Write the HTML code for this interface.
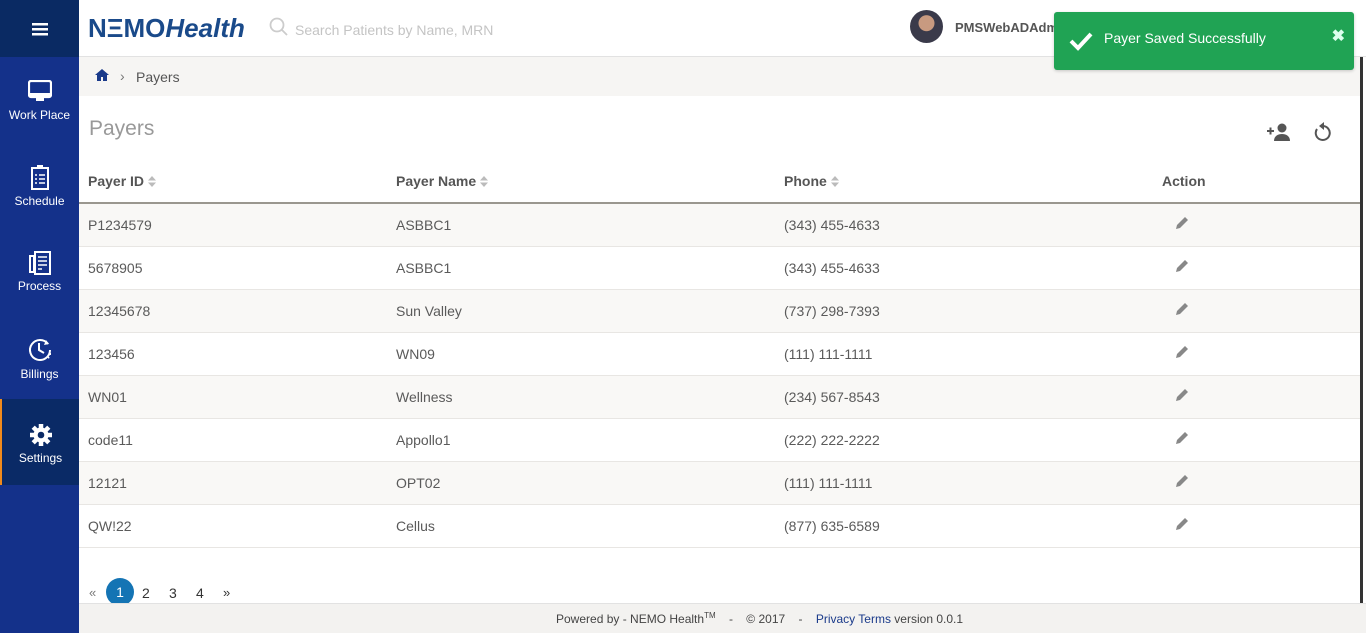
<!DOCTYPE html>
<html><head><meta charset="utf-8"><style>
*{box-sizing:border-box;margin:0;padding:0}
body{width:1366px;height:633px;overflow:hidden;font-family:"Liberation Sans",Arial,sans-serif;background:#fff;position:relative;color:#555}
.side{position:absolute;left:0;top:0;width:79px;height:633px;background:#14318a}
.ham{height:57px;background:#0a2a63;display:flex;align-items:center;justify-content:center}
.nav{position:absolute;left:0;width:79px;height:86px;color:#fff;font-size:12px;text-align:center}
.nav svg{display:block;margin:0 auto 4px}
.top{position:absolute;left:79px;top:0;right:0;height:57px;border-bottom:1px solid #e2e2e2;background:#fff}
.crumb{position:absolute;left:79px;top:57px;right:6px;height:39px;background:#f6f5f3;font-size:14px;color:#555}
.scroll{position:absolute;right:0;top:57px;width:6px;height:546px;background:#fff;border-left:3px solid #333}
table{position:absolute;left:79px;top:160px;width:1281px;border-collapse:collapse;font-size:14px}
th{text-align:left;height:43px;font-weight:bold;color:#555;border-bottom:2px solid #9a978f;padding-left:9px}
td{height:43px;border-bottom:1px solid #e8e6e3;padding-left:9px;color:#5a5a5a}
tbody tr:nth-child(odd){background:#f9f8f6}
.s{display:inline-block;vertical-align:middle;margin-left:4px;margin-top:-2px}
.foot{position:absolute;left:79px;right:0;top:603px;height:30px;background:#f3f2f0;border-top:1px solid #e2e2e2;font-size:12px;color:#444}
.toast{position:absolute;left:1054px;top:12px;width:300px;height:58px;background:#20a354;border-radius:3px;color:#fff;font-size:14px;box-shadow:0 1px 3px rgba(0,0,0,.2)}
</style></head><body>
<div class="side">
<div class="ham"><svg width="16" height="14"><rect y="1" width="16" height="2.5" fill="#fff"/><rect y="6" width="16" height="2.5" fill="#fff"/><rect y="11" width="16" height="2.5" fill="#fff"/></svg></div>
<div class="nav" style="top:80px"><svg width="24" height="24" viewBox="0 0 24 24"><rect x="1" y="1" width="22" height="16" rx="2" fill="none" stroke="#fff" stroke-width="2.2"/><rect x="1" y="13" width="22" height="4" fill="#fff"/><rect x="8" y="18" width="8" height="3" fill="#fff"/></svg>Work Place</div>
<div class="nav" style="top:164px"><svg width="20" height="26" viewBox="0 0 20 26"><rect x="2" y="4" width="16" height="21" fill="none" stroke="#fff" stroke-width="2"/><rect x="7" y="1" width="6" height="4" fill="#fff"/><path d="M5 11h2M9 11h6M5 15h2M9 15h6M5 19h2M9 19h6" stroke="#fff" stroke-width="1.5"/></svg>Schedule</div>
<div class="nav" style="top:251px"><svg width="24" height="24" viewBox="0 0 24 24"><rect x="7" y="1" width="15" height="22" fill="none" stroke="#fff" stroke-width="2"/><rect x="2" y="5" width="4" height="16" fill="none" stroke="#fff" stroke-width="2"/><path d="M10 6h9M10 10h9M10 14h9M10 18h4" stroke="#fff" stroke-width="1.6"/></svg>Process</div>
<div class="nav" style="top:337px"><svg width="26" height="26" viewBox="0 0 26 26"><path d="M21 7A10 10 0 1 0 23 13" fill="none" stroke="#fff" stroke-width="2"/><path d="M23 16v3M22 20l-1 1" stroke="#fff" stroke-width="2" stroke-dasharray="2 2"/><path d="M12 6v7l5 3" fill="none" stroke="#fff" stroke-width="2"/><path d="M19 3l3 4-5 1z" fill="#fff"/></svg>Billings</div>
<div class="nav" style="top:399px;height:86px;background:#0a2a66;border-left:2px solid #f08a1c;padding-top:24px"><svg width="24" height="24" viewBox="0 0 24 24"><circle cx="12" cy="12" r="7.5" fill="#fff"/><g stroke="#fff" stroke-width="4.5"><path d="M12 1v22M1 12h22M4.2 4.2l15.6 15.6M19.8 4.2L4.2 19.8"/></g><circle cx="12" cy="12" r="3.3" fill="#0a2a66"/></svg>Settings</div>
</div>
<div class="top">
<div style="position:absolute;left:9px;top:13px;font-size:26px;font-weight:bold;color:#1a4a8a;letter-spacing:0">N<span>Ξ</span>MO<i>Health</i></div>
<svg style="position:absolute;left:190px;top:17px" width="20" height="20"><circle cx="8" cy="8" r="6.5" fill="none" stroke="#ccc" stroke-width="1.8"/><path d="M13 13l5 5" stroke="#ccc" stroke-width="1.8"/></svg>
<div style="position:absolute;left:216px;top:22px;font-size:14px;color:#c4c4c4">Search Patients by Name, MRN</div>
<div style="position:absolute;left:831px;top:10px;width:33px;height:33px;border-radius:50%;background:radial-gradient(circle at 50% 40%,#c89a80 0 30%,#3a3a4a 32%);"></div>
<div style="position:absolute;left:876px;top:20px;font-size:13px;font-weight:bold;color:#555">PMSWebADAdm</div>
</div>
<div class="crumb"><svg style="position:absolute;left:16px;top:12px" width="14" height="12" viewBox="0 0 14 12"><path d="M7 0L0 6h2v6h4V8h2v4h4V6h2z" fill="#1a3a8a"/></svg><span style="position:absolute;left:41px;top:11px;color:#777">›</span><span style="position:absolute;left:57px;top:12px">Payers</span></div>
<div style="position:absolute;left:89px;top:117px;font-size:21px;color:#999">Payers</div>
<svg style="position:absolute;left:1267px;top:123px" width="24" height="18" viewBox="0 0 24 18"><path d="M0 8h7M3.5 4.5v7" stroke="#555" stroke-width="2"/><circle cx="15" cy="5" r="4.5" fill="#555"/><path d="M7 18c0-5 4-7 8-7s8 2 8 7z" fill="#555"/></svg>
<svg style="position:absolute;left:1313px;top:121px" width="20" height="22" viewBox="0 0 20 22"><path d="M4 8a7 7 0 1 0 6-3" fill="none" stroke="#555" stroke-width="2"/><path d="M11 1L6 5l5 4z" fill="#555"/></svg>
<table><thead><tr><th style="width:308px">Payer ID<svg class="s" width="8" height="11"><path d="M4 0L8 4.5H0zM4 11L0 6.5h8z" fill="#bbb"/></svg></th><th style="width:388px">Payer Name<svg class="s" width="8" height="11"><path d="M4 0L8 4.5H0zM4 11L0 6.5h8z" fill="#bbb"/></svg></th><th style="width:378px">Phone<svg class="s" width="8" height="11"><path d="M4 0L8 4.5H0zM4 11L0 6.5h8z" fill="#bbb"/></svg></th><th>Action</th></tr></thead>
<tbody>
<tr><td>P1234579</td><td>ASBBC1</td><td>(343) 455-4633</td><td><svg width="14" height="14" viewBox="0 0 14 14" style="margin-left:13px;margin-top:-6px"><path d="M1 13l1-4 8-8 3 3-8 8z" fill="#888"/></svg></td></tr>
<tr><td>5678905</td><td>ASBBC1</td><td>(343) 455-4633</td><td><svg width="14" height="14" viewBox="0 0 14 14" style="margin-left:13px;margin-top:-6px"><path d="M1 13l1-4 8-8 3 3-8 8z" fill="#888"/></svg></td></tr>
<tr><td>12345678</td><td>Sun Valley</td><td>(737) 298-7393</td><td><svg width="14" height="14" viewBox="0 0 14 14" style="margin-left:13px;margin-top:-6px"><path d="M1 13l1-4 8-8 3 3-8 8z" fill="#888"/></svg></td></tr>
<tr><td>123456</td><td>WN09</td><td>(111) 111-1111</td><td><svg width="14" height="14" viewBox="0 0 14 14" style="margin-left:13px;margin-top:-6px"><path d="M1 13l1-4 8-8 3 3-8 8z" fill="#888"/></svg></td></tr>
<tr><td>WN01</td><td>Wellness</td><td>(234) 567-8543</td><td><svg width="14" height="14" viewBox="0 0 14 14" style="margin-left:13px;margin-top:-6px"><path d="M1 13l1-4 8-8 3 3-8 8z" fill="#888"/></svg></td></tr>
<tr><td>code11</td><td>Appollo1</td><td>(222) 222-2222</td><td><svg width="14" height="14" viewBox="0 0 14 14" style="margin-left:13px;margin-top:-6px"><path d="M1 13l1-4 8-8 3 3-8 8z" fill="#888"/></svg></td></tr>
<tr><td>12121</td><td>OPT02</td><td>(111) 111-1111</td><td><svg width="14" height="14" viewBox="0 0 14 14" style="margin-left:13px;margin-top:-6px"><path d="M1 13l1-4 8-8 3 3-8 8z" fill="#888"/></svg></td></tr>
<tr><td>QW!22</td><td>Cellus</td><td>(877) 635-6589</td><td><svg width="14" height="14" viewBox="0 0 14 14" style="margin-left:13px;margin-top:-6px"><path d="M1 13l1-4 8-8 3 3-8 8z" fill="#888"/></svg></td></tr>
</tbody></table>
<div style="position:absolute;left:89px;top:585px;font-size:13px;color:#777">«</div>
<div style="position:absolute;left:106px;top:578px;width:28px;height:28px;border-radius:50%;background:#1474b4;color:#fff;font-size:14px;text-align:center;line-height:28px">1</div>
<div style="position:absolute;left:142px;top:585px;font-size:14px;color:#333">2</div>
<div style="position:absolute;left:169px;top:585px;font-size:14px;color:#333">3</div>
<div style="position:absolute;left:196px;top:585px;font-size:14px;color:#333">4</div>
<div style="position:absolute;left:223px;top:585px;font-size:13px;color:#333">»</div>
<div class="foot"><div style="position:absolute;left:477px;top:7px">Powered by - NEMO Health<sup style="font-size:8px">TM</sup> &nbsp;&nbsp; - &nbsp;&nbsp; © 2017 &nbsp;&nbsp; - &nbsp;&nbsp; <span style="color:#1a3a8a">Privacy Terms</span> version 0.0.1</div></div>
<div class="scroll"></div>
<div class="toast"><svg style="position:absolute;left:15px;top:19px" width="24" height="20" viewBox="0 0 24 20"><path d="M2 10l7 7L22 3" fill="none" stroke="#fff" stroke-width="4"/></svg><span style="position:absolute;left:50px;top:18px">Payer Saved Successfully</span><span style="position:absolute;right:9px;top:14px;font-size:16px;font-weight:bold;color:#dfe">✖</span></div>
</body></html>
